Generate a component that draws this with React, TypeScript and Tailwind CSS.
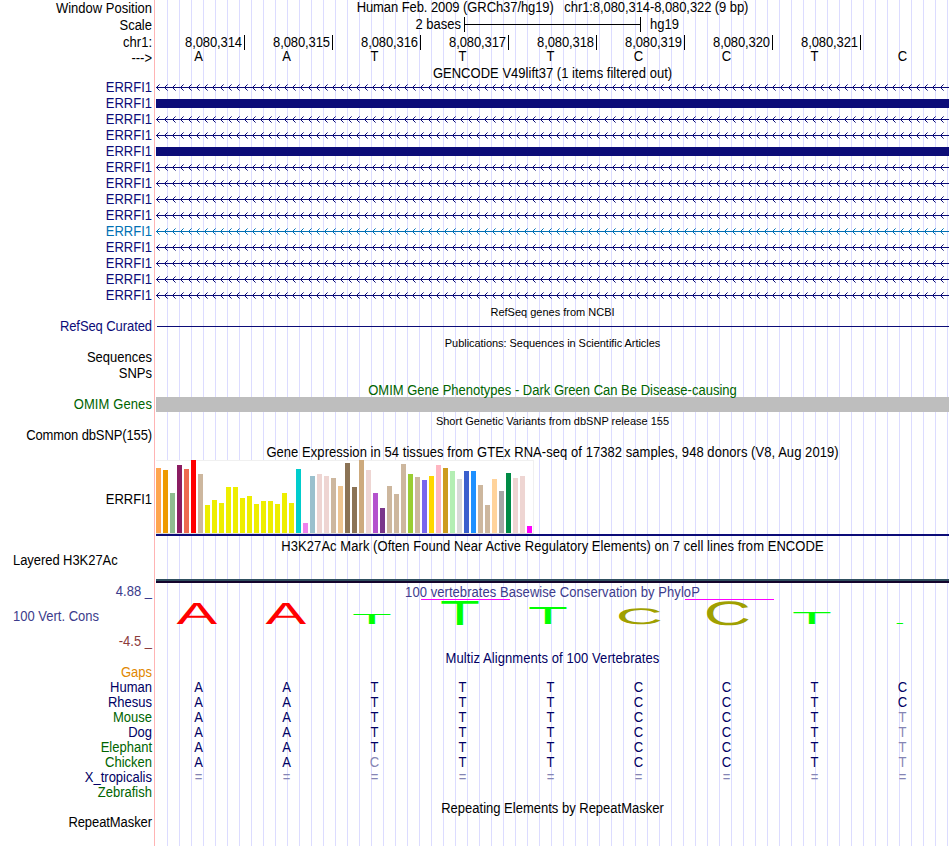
import React from "react";

const NAVY = "text-[#0c0c78]";
const DEEP = "text-[#000064]";
const GREEN = "text-[#006400]";

const Txt = ({ className = "", children }: { className?: string; children: React.ReactNode }) => (
  <span className={`block origin-[50%_11px] scale-y-[1.06] whitespace-pre ${className}`}>{children}</span>
);

type RowProps = { label?: string; h: string; pad?: string; labelClass?: string; children?: React.ReactNode };

const Row = ({ label = "", h, pad = "", labelClass = "text-black", children }: RowProps) => (
  <div className={`flex ${h}`}>
    <div className={`flex w-[152px] shrink-0 items-center justify-end ${pad} ${labelClass}`}>
      <Txt>{label}</Txt>
    </div>
    <div className="ml-1 flex w-[793px] shrink-0 flex-col">{children}</div>
  </div>
);

const Title = ({ h, className = "", children }: { h: string; className?: string; children: React.ReactNode }) => (
  <Row h={h}>
    <div className={`flex h-full items-center justify-center ${className}`}>
      <Txt>{children}</Txt>
    </div>
  </Row>
);

const Intron = ({ id, color }: { id: string; color: string }) => (
  <svg className="h-4 w-full" shapeRendering="crispEdges">
    <defs>
      <pattern id={id} width="8" height="16" patternUnits="userSpaceOnUse">
        <rect x="0" y="7" width="8" height="1" fill={color} />
        <rect x="1" y="6" width="1" height="1" fill={color} />
        <rect x="1" y="8" width="1" height="1" fill={color} />
        <rect x="2" y="5" width="1" height="1" fill={color} />
        <rect x="2" y="9" width="1" height="1" fill={color} />
        <rect x="3" y="4" width="1" height="1" fill={color} opacity="0.6" />
        <rect x="3" y="10" width="1" height="1" fill={color} opacity="0.6" />
      </pattern>
    </defs>
    <rect width="793" height="16" fill={`url(#${id})`} />
  </svg>
);

const Bases = ({ seq, className = "" }: { seq: string; className?: string }) => (
  <div className={`-ml-[1.5px] flex h-full items-center ${className}`}>
    {seq.split("").map((b, i) => (
      <Txt key={i} className={`w-[88px] shrink-0 text-center ${b === "=" || b === b.toLowerCase() ? "text-[#8585b4]" : ""}`}>{b.toUpperCase()}</Txt>
    ))}
  </div>
);

const positions = ["8,080,314", "8,080,315", "8,080,316", "8,080,317", "8,080,318", "8,080,319", "8,080,320", "8,080,321"];

const genes = [0, 1, 0, 0, 1, 0, 0, 0, 0, 2, 0, 0, 0, 0];

const barColors = [
  "#FFA54F", "#EE9A00", "#8FBC8F", "#8B1C62", "#EE6A50", "#FF0000", "#CDB79E",
  ...Array(13).fill("#EEEE00"),
  "#00CDCD", "#EE82EE", "#9AC0CD", "#EED5D2", "#EED5D2", "#CDB79E", "#EEC591", "#8B7355", "#8B7355", "#CDAA7D",
  "#EED5D2", "#B452CD", "#7A378B", "#CDB79E", "#CDB79E", "#CDB79E", "#9ACD32", "#CDB79E", "#7A67EE", "#FFD700",
  "#FFB6C1", "#CD9B1D", "#B4EEB4", "#D9D9D9", "#3A5FCD", "#1E90FF", "#CDB79E", "#CDB79E", "#FFD39B", "#A6A6A6",
  "#008B45", "#EED5D2", "#EED5D2", "#FF00FF",
];
const barHeights = [
  65, 63, 40, 68, 64, 73, 59, 28, 33, 30, 46, 46, 35, 37, 29, 32, 32, 29, 40, 30, 64, 10, 57, 59, 57, 55, 47, 70,
  46, 73, 63, 40, 25, 47, 39, 69, 59, 56, 53, 57, 68, 65, 62, 54, 62, 62, 48, 28, 54, 42, 60, 55, 57, 7,
];

// Ink box of each base at font size 100: left, right, below-baseline, cap height.
const glyphBox: Record<string, [number, number, number, number]> = {
  A: [0.15, 66.5, 0, 68.8],
  T: [2.2, 58.8, 0, 68.8],
  C: [5, 67.7, -1, 69.8],
};

const logo: [string, number, number, number, number, string][] = [
  ["A", 176.5, 217, 603, 624, "#ff0000"],
  ["A", 265.5, 306, 603, 624, "#ff0000"],
  ["T", 353.5, 390.5, 614, 624, "#00ff00"],
  ["T", 441.5, 478.5, 601, 625, "#00ff00"],
  ["T", 529.5, 566.5, 607, 624, "#00ff00"],
  ["C", 619, 660, 608, 624, "#a0a000"],
  ["C", 707, 748, 601, 625, "#a0a000"],
  ["T", 793.5, 830.5, 612, 624, "#00ff00"],
  ["T", 881.5, 918.5, 623, 624, "#00ff00"],
];

const Logo = () => (
  <svg className="h-[51px] w-full overflow-visible" viewBox="156 599 793 51" textRendering="geometricPrecision">
    <rect x="421" y="599" width="89" height="1" fill="#ff00ff" />
    <rect x="685" y="599" width="89" height="1" fill="#ff00ff" />
    {logo.map(([c, x0, x1, y0, y1, fill], i) => {
      const [gx0, gx1, gy0, gy1] = glyphBox[c];
      const sx = (x1 - x0) / (gx1 - gx0);
      const sy = (y1 - y0) / (gy1 - gy0);
      return (
        <text key={i} fontSize="100" fill={fill} transform={`translate(${x0 - gx0 * sx} ${y1 + gy0 * sy}) scale(${sx} ${sy})`}>{c}</text>
      );
    })}
  </svg>
);

const species: [string, string, string][] = [
  ["Human", DEEP, "AATTTCCTC"],
  ["Rhesus", DEEP, "AATTTCCTC"],
  ["Mouse", GREEN, "AATTTCCTt"],
  ["Dog", DEEP, "AATTTCCTt"],
  ["Elephant", GREEN, "AATTTCCTt"],
  ["Chicken", GREEN, "AAcTTCCTt"],
  ["X_tropicalis", DEEP, "========="],
  ["Zebrafish", GREEN, ""],
];

export default function App() {
  return (
    <div className="h-[846px] w-[950px] overflow-hidden bg-white font-['Liberation_Sans',Arial,sans-serif] text-[13px] leading-none">
      <div className="h-full bg-[linear-gradient(to_right,#fff_0_154px,#ffb4b4_154px_155px,#fff_155px_167px,transparent_167px),repeating-linear-gradient(to_right,#fff_0_11px,#dcdcff_11px_12px)]">
        <Row h="h-[17px]" label="Window Position">
          <div className="flex h-[15px] items-center justify-center tracking-[-0.08px]">
            <Txt>{"Human Feb. 2009 (GRCh37/hg19)   chr1:8,080,314-8,080,322 (9 bp)"}</Txt>
          </div>
        </Row>
        <Row h="h-[17px]" label="Scale">
          <div className="flex h-[15px] items-center">
            <Txt className="w-[305px] text-right">2 bases</Txt>
            <div className="ml-[3px] flex h-[15px] w-[177px] items-center border-x border-black">
              <div className="h-px w-full bg-black" />
            </div>
            <Txt className="ml-[9px]">hg19</Txt>
          </div>
        </Row>
        <Row h="h-4" pad="pt-px" label="chr1:">
          <div className="flex h-full items-center">
            {positions.map((p) => (
              <div key={p} className="flex h-full w-[88px] shrink-0 items-center justify-end">
                <Txt className="pt-px tracking-[-0.1px]">{p}</Txt>
                <i className="ml-0.5 -mr-px h-[15px] w-px bg-black" />
              </div>
            ))}
          </div>
        </Row>
        <Row h="h-4" pad="pt-px" label="--->">
          <div className="h-[13px]"><Bases seq="AATTTCCTC" /></div>
        </Row>
        <Title h="h-3.5" className="pt-px tracking-[0.02px]">GENCODE V49lift37 (1 items filtered out)</Title>
        {genes.map((g, i) => (
          <Row key={i} h="h-4" pad="pb-px" label="ERRFI1" labelClass={g === 2 ? "text-[#0070b4]" : NAVY}>
            {g === 1 ? <div className="mt-[3px] h-[9px] bg-[#0c0c78]" /> : <Intron id={`intron${i}`} color={g === 2 ? "#0070b4" : "#0c0c78"} />}
          </Row>
        ))}
        <Title h="h-4" className="text-[11px]">RefSeq genes from NCBI</Title>
        <Row h="h-[14px]" pad="pb-px" label="RefSeq Curated" labelClass={`tracking-[-0.08px] ${NAVY}`}>
          <div className="mt-1.5 ml-px h-px bg-[#0c0c78]" />
        </Row>
        <Title h="h-4" className="pt-0.5 text-[11px] tracking-[-0.05px]">Publications: Sequences in Scientific Articles</Title>
        <Row h="h-4" pad="pb-px" label="Sequences" />
        <Row h="h-[17px]" pad="pb-0.5" label="SNPs" />
        <Title h="h-[14px]" className={`pt-px ${GREEN}`}>OMIM Gene Phenotypes - Dark Green Can Be Disease-causing</Title>
        <Row h="h-[15px]" label="OMIM Genes" labelClass={`tracking-[0.1px] ${GREEN}`}>
          <div className="h-full bg-[#bebebe]" />
        </Row>
        <Title h="h-[17px]" className="pt-px text-[11px]">Short Genetic Variants from dbSNP release 155</Title>
        <Row h="h-[13px]" label="Common dbSNP(155)" labelClass="tracking-[-0.12px]" />
        <div className="h-1" />
        <Title h="h-[14px]" className="pb-px tracking-[0.055px]">Gene Expression in 54 tissues from GTEx RNA-seq of 17382 samples, 948 donors (V8, Aug 2019)</Title>
        <Row h="h-[76px]" pad="pt-[3px]" label="ERRFI1">
          <div className="flex h-[74px] w-[378px] items-end gap-0.5 border-t border-r border-b border-[#f0f0f0] border-b-[#dcdcdc] bg-white">
            {barHeights.map((height, i) => (
              <div key={i} className="w-[5px] shrink-0" style={{ height, backgroundColor: barColors[i] }} />
            ))}
          </div>
          <div className="h-0.5 bg-[#0c0c78]" />
        </Row>
        <div className="h-[3px]" />
        <Title h="h-[15px]" className="tracking-[0.055px]">H3K27Ac Mark (Often Found Near Active Regulatory Elements) on 7 cell lines from ENCODE</Title>
        <div className="flex h-[13px] items-center pl-[13px] tracking-[-0.06px]"><Txt>Layered H3K27Ac</Txt></div>
        <div className="h-3" />
        <div className="ml-[156px] h-1 w-[793px] border-t-2 border-[#2f4f5f] bg-[#14052d]" />
        <div className="h-[3px]" />
        <Title h="h-[13px]" className="tracking-[0.06px] text-[#3c3c8c]">100 vertebrates Basewise Conservation by PhyloP</Title>
        <div className="flex h-[51px]">
          <div className="-mt-[14px] flex w-[156px] shrink-0 flex-col gap-3">
            <div className="flex h-[13px] items-center justify-end pr-1 text-[#3c3c8c]"><Txt>4.88 _</Txt></div>
            <div className="flex h-[13px] items-center pl-[13px] text-[#3c3c8c]"><Txt>100 Vert. Cons</Txt></div>
            <div className="flex h-[13px] items-center justify-end pr-1 text-[#8c3c3c]"><Txt>-4.5 _</Txt></div>
          </div>
          <div className="w-[793px]"><Logo /></div>
        </div>
        <Title h="h-4" className={`pt-px tracking-[0.08px] ${DEEP}`}>Multiz Alignments of 100 Vertebrates</Title>
        <Row h="h-[15px]" pad="pb-0.5" label="Gaps" labelClass="text-[#e18700]" />
        {species.map(([name, color, seq]) => (
          <Row key={name} h="h-[15px]" pad="pb-0.5" label={name} labelClass={color}>
            <Bases seq={seq} className={`pb-0.5 ${DEEP}`} />
          </Row>
        ))}
        <Title h="h-[15px]">Repeating Elements by RepeatMasker</Title>
        <Row h="h-[13px]" label="RepeatMasker" labelClass="tracking-[-0.08px]" />
      </div>
    </div>
  );
}
